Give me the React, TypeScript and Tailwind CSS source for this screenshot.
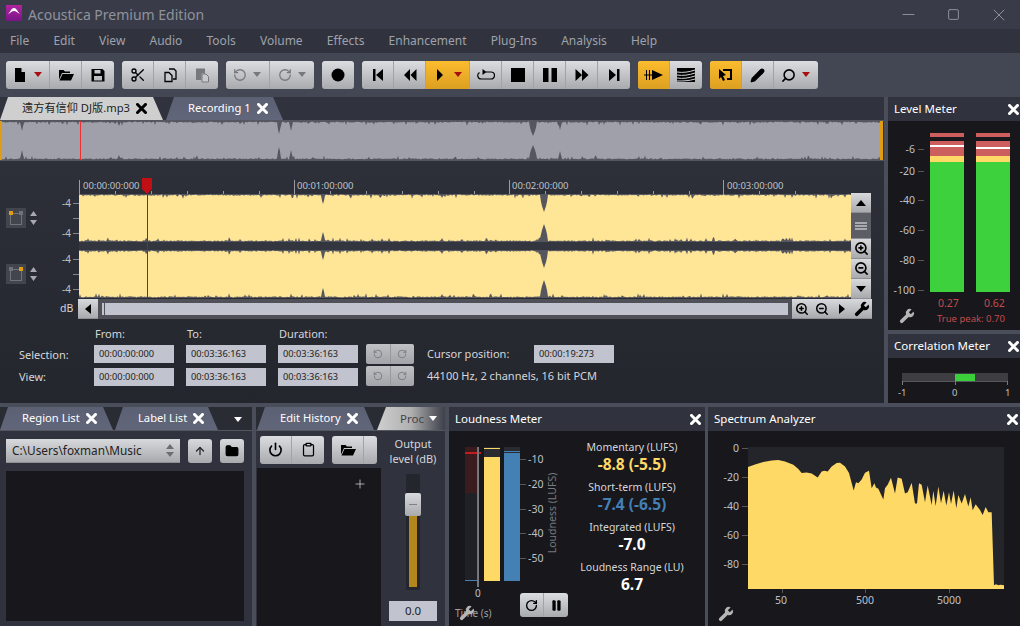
import { ReactNode } from "react";
import {
  ArrowUp,
  Folder,
  Power,
  Clipboard,
  Pause,
  Plus,
  Minus,
  Square,
  X,
  RotateCcw,
  RotateCw,
  Scissors,
  Pencil,
  Search,
  ZoomIn,
  ZoomOut,
} from "lucide-react";

// deterministic noise so the waveform does not change between renders
function noise(i: number, seed: number) {
  const v = Math.sin(i * 12.9898 + seed * 78.233) * 43758.5453;
  return v - Math.floor(v);
}

type Dip = [number, number, number]; // centre, depth, half width

function edge(width: number, seed: number, dips: Dip[]) {
  const out: number[] = [];
  for (let x = 0; x <= width; x++) {
    const n = noise(x, seed);
    let h = n > 0.93 ? 2 + (n - 0.93) * 40 : 0.6 + n * 1.2;
    for (const [c, depth, hw] of dips) {
      const d = Math.abs(x - c);
      if (d < hw) h = Math.max(h, depth * Math.pow(1 - d / hw, 0.6));
    }
    out.push(h);
  }
  return out;
}

function bandPath(width: number, height: number, seed: number, dips: Dip[]) {
  const top = edge(width, seed, dips);
  const bot = edge(width, seed + 3, dips);
  let d = "M0 " + top[0].toFixed(1);
  top.forEach((h, i) => {
    d += " L" + i + " " + h.toFixed(1);
  });
  for (let i = bot.length - 1; i >= 0; i--) {
    d += " L" + i + " " + (height - bot[i]).toFixed(1);
  }
  return d + " Z";
}

const spectrumPts =
  "129,187 150,179 175,172 200,167 220,166 240,170 265,180 280,193 290,205 305,203 320,206 338,218 350,200 358,198 368,200 380,185 395,175 405,174 420,185 432,205 446,257 453,232 460,235 470,224 480,204 492,198 500,250 508,235 513,248 520,252 535,284 540,250 548,240 558,219 570,266 578,218 590,222 600,266 608,262 620,234 630,296 636,296 642,235 650,240 660,292 668,242 680,300 685,258 692,303 700,245 708,295 716,258 724,302 732,262 738,297 746,257 754,310 760,270 770,296 780,267 790,305 797,277 803,316 812,298 825,315 833,330 842,306 850,322 860,322 867,540 873,537 880,540 886,538 897,540 897,551 129,551";

const overviewDips: Dip[] = [
  [22, 10, 1.5],
  [119, 5, 1.5],
  [279, 13, 2],
  [291, 10, 1.5],
  [533, 15, 4],
  [560, 9, 1.5],
];
const trackDips: Dip[] = [
  [244, 10, 2],
  [465, 18, 4],
  [363, 4, 1.5],
];

function Toolbar({ children }: { children: ReactNode }) {
  return (
    <div className="flex h-7 rounded-[3px] overflow-hidden bg-gradient-to-b from-[#dcdde0] to-[#a9aaae]">{children}</div>
  );
}

function Btn({ wide, active, children, last }: { wide?: boolean; active?: boolean; children: ReactNode; last?: boolean }) {
  return (
    <div
      className={`flex items-center justify-center h-full text-black ${wide ? "w-[44px]" : "w-8"} ${
        last ? "" : "border-r border-[#a2a3a8]"
      } ${active ? "bg-gradient-to-b from-[#fbbc2e] to-[#dd9f20]" : ""}`}
    >
      {children}
    </div>
  );
}

function Caret({ red }: { red?: boolean }) {
  return (
    <svg width="10" height="6" viewBox="0 0 10 6" className="ml-[5px]">
      <path d="M1 0h8L5 5z" fill={red ? "#a80f12" : "#77787c"} />
    </svg>
  );
}

function Glyph({ d, size = 16 }: { d: string; size?: number }) {
  return (
    <svg width={size} height={size} viewBox="0 0 16 16" fill="currentColor" fillRule="evenodd">
      <path d={d} />
    </svg>
  );
}

const folderOpenD = "M1 3h4.500L7 4.500h5V6H4L1 12.500zM4.500 7H16l-3 6.500H1.500z";
const wrenchD = "M14.600 3.400L11.800 6.200 9.800 4.200 12.600 1.400A4 4 0 0 0 7 6.400L1.400 12A1.800 1.800 0 0 0 4 14.600L9.600 9A4 4 0 0 0 14.600 3.400z";

function WrenchIcon() {
  return (
    <span className="text-[#b5b5b5]">
      <Glyph d={wrenchD} />
    </span>
  );
}

function CloseX({ color = "white" }: { color?: string }) {
  return (
    <svg width="11" height="11" viewBox="0 0 11 11">
      <path d="M1.500 1.500l8 8M9.500 1.500l-8 8" stroke={color} strokeWidth="3" strokeLinecap="square" />
    </svg>
  );
}

function Field({ value }: { value: string }) {
  return (
    <div className="w-20 h-[18px] bg-[#c1c4ce] text-[#222] text-[9.25px] leading-[18px] pl-[5px]">{value}</div>
  );
}

function UndoPair() {
  return (
    <div className="flex h-5 w-12 rounded-[2px] overflow-hidden bg-gradient-to-b from-[#c0c1c5] to-[#a3a4a9] text-[#74757a]">
      <div className="flex-1 flex items-center justify-center border-r border-[#999]">
        <RotateCcw size={10} strokeWidth={2} />
      </div>
      <div className="flex-1 flex items-center justify-center">
        <RotateCw size={10} strokeWidth={2} />
      </div>
    </div>
  );
}

function PanelHeader({ title, right = "pr-[1px]" }: { title: string; right?: string }) {
  return (
    <div className={`h-[24px] shrink-0 bg-[#30333d] flex items-center justify-between pl-[6px] text-[11.5px] text-white ${right}`}>
      <span>{title}</span>
      <CloseX />
    </div>
  );
}

function ScrollBtn({ children }: { children: ReactNode }) {
  return (
    <div className="w-5 h-5 shrink-0 flex items-center justify-center bg-gradient-to-b from-[#d8d9dc] to-[#a9aaae] border-b border-[#8e8f94] text-black">
      {children}
    </div>
  );
}

function Tab({ label, className, light }: { label: string; className: string; light?: boolean }) {
  return (
    <div
      className={`h-[23px] shrink-0 flex items-center gap-[6px] text-[11.2px] [clip-path:polygon(8px_0,calc(100%-10px)_0,100%_100%,0_100%)] ${className} ${
        light ? "bg-[#cfcfcf] text-[#222]" : "bg-gradient-to-b from-[#5c6073] to-[#62667a] text-white"
      }`}
    >
      <span className="whitespace-nowrap">{label}</span>
      <CloseX color={light ? "black" : "white"} />
    </div>
  );
}

function TrackControls({ right }: { right?: boolean }) {
  return (
    <div className="w-[44px] flex items-center pl-[6px]">
      <div className="w-5 h-5 bg-[#43454d] relative flex items-center justify-center">
        <div className="w-3 h-3 mt-[1px] border border-[#70727a]" />
        <div className={`absolute top-[3px] left-[3px] w-[4px] h-[4px] ${right ? "bg-[#70727a]" : "bg-[#e09c12]"}`} />
        <div className={`absolute top-[3px] right-[3px] w-[4px] h-[4px] ${right ? "bg-[#e09c12]" : "bg-[#70727a]"}`} />
      </div>
      <svg width="7" height="14" viewBox="0 0 7 14" className="ml-1">
        <path d="M3.500 0L7 5H0zM0 9h7l-3.500 5z" fill="#a8a9ae" />
      </svg>
    </div>
  );
}

function DbScale() {
  return (
    <div className="flex-1 flex flex-col justify-between text-[10px] leading-[10px] text-[#bfc1c8] items-end py-1">
      {["-4", "-", "-4"].map((t, i) => (
        <div key={i} className="flex items-center gap-[2px]">
          {t !== "-" && <span>{t}</span>}
          <div className="w-[6px] h-px bg-[#85878f]" />
        </div>
      ))}
    </div>
  );
}

function ScaleRow({ label, className }: { label: string; className: string }) {
  return (
    <div className={`absolute flex items-center gap-[3px] text-[10.5px] leading-[14px] text-[#bfc1c8] ${className}`}>
      <span>{label}</span>
      <div className="w-[6px] h-px bg-[#55565c]" />
    </div>
  );
}

function LoudScale({ label, className }: { label: string; className: string }) {
  return (
    <div className={`absolute left-[71px] flex items-center gap-[2px] text-[10.5px] leading-[14px] text-[#bfc1c8] ${className}`}>
      <div className="w-[6px] h-px bg-[#55565c]" />
      <span>{label}</span>
    </div>
  );
}

function LevelBar({ whiteClass }: { whiteClass: string }) {
  return (
    <div className="w-full h-full flex flex-col">
      <div className="h-[4px] bg-[#cc5e5e]" />
      <div className="h-[4px]" />
      <div className="h-[15px] bg-[#cc5e5e] relative">
        <div className={`absolute w-full h-[2px] bg-white ${whiteClass}`} />
      </div>
      <div className="h-[6px] bg-[#ffd966]" />
      <div className="flex-1 bg-[#3ed13e]" />
    </div>
  );
}

function Stat({ label, value, color }: { label: string; value: string; color: string }) {
  return (
    <div className="flex flex-col items-center mb-[7px]">
      <span className="whitespace-nowrap text-[10.5px] leading-[15px] text-[#d6d6da]">{label}</span>
      <span className={`text-[15.5px] font-bold leading-[18px] ${color}`}>{value}</span>
    </div>
  );
}

const majorTicks = ["left-0", "left-[215px]", "left-[430px]", "left-[644px]"];
const minorTicks = [36, 72, 108, 144, 180, 251, 287, 323, 359, 395, 466, 502, 538, 574, 610, 680, 716];

export default function App() {
  const overview = bandPath(884, 39, 1, overviewDips);
  const chanA = bandPath(772, 48, 2, trackDips);
  const chanB = bandPath(772, 48, 5, trackDips);

  return (
    <div
      className="w-[1020px] h-[626px] overflow-hidden flex flex-col bg-[#4a4d5a] text-[#d6d6da] text-[11.5px]"
      style={{ fontFamily: '"Noto Sans", "Noto Sans CJK SC", sans-serif' }}
    >
      {/* Title bar */}
      <div className="h-[29px] shrink-0 bg-[#393c48] flex items-center pl-[6px]">
        <svg width="16" height="16" viewBox="0 0 16 16" className="mb-[3px]">
          <defs>
            <linearGradient id="logo" x1="0" y1="0" x2="0" y2="1">
              <stop offset="0" stopColor="#b0249f" />
              <stop offset="1" stopColor="#7a1488" />
            </linearGradient>
          </defs>
          <rect width="16" height="16" fill="url(#logo)" />
          <path d="M1 10C4 8 5 3 8 3s4 5 7 7C12 8 10 6 8 6s-4 2-7 4z" fill="white" />
        </svg>
        <span className="ml-[6px] text-[14px] text-[#8f929c]">Acoustica Premium Edition</span>
        <div className="ml-auto flex items-center text-[#8f929c]">
          <div className="w-10 flex justify-center">
            <Minus size={19} strokeWidth={1.2} />
          </div>
          <div className="w-[50px] flex justify-center">
            <Square size={13} strokeWidth={1.8} />
          </div>
          <div className="w-[42px] flex justify-center">
            <X size={20} strokeWidth={1.2} />
          </div>
        </div>
      </div>

      {/* Menu */}
      <div className="h-[24px] shrink-0 bg-[#30333d] flex items-center pl-[10px] gap-[24.2px] text-[12px] text-[#9fa2ac]">
        {["File", "Edit", "View", "Audio", "Tools", "Volume", "Effects", "Enhancement", "Plug-Ins", "Analysis", "Help"].map((m) => (
          <span key={m}>{m}</span>
        ))}
      </div>

      {/* Toolbar */}
      <div className="h-[44px] shrink-0 bg-[#434753] flex items-center pl-[6px] gap-[8px]">
        <Toolbar>
          <Btn wide>
            <Glyph d="M3 1h6l4 4v10H3zM9.500 1.500V5H13" />
            <Caret red />
          </Btn>
          <Btn>
            <Glyph d={folderOpenD} />
          </Btn>
          <Btn last>
            <Glyph d="M1.500 2h11l2 2v10.500h-13zM4.500 3v3.500h6V3zM4 9v4.500h8V9z" />
          </Btn>
        </Toolbar>
        <Toolbar>
          <Btn>
            <Scissors size={16} />
          </Btn>
          <Btn>
            <svg width="16" height="16" viewBox="0 0 16 16" fill="none" stroke="black" strokeWidth="1.300">
              <path d="M7 2h5l2 2v8h-3" />
              <path d="M3 5.500h4l3 3v6H3z" fill="#c8c9cc" />
            </svg>
          </Btn>
          <Btn last>
            <svg width="16" height="16" viewBox="0 0 16 16">
              <path d="M2 1.500h9v5H7.500V13H2z" fill="#77787c" />
              <path d="M8 7h4l2.500 2.500v5.500H8z" fill="#c8c9cc" stroke="#77787c" />
            </svg>
          </Btn>
        </Toolbar>
        <Toolbar>
          <Btn wide>
            <RotateCcw size={14} strokeWidth={2.2} className="text-[#77787c]" />
            <Caret />
          </Btn>
          <Btn wide last>
            <RotateCw size={14} strokeWidth={2.2} className="text-[#77787c]" />
            <Caret />
          </Btn>
        </Toolbar>
        <Toolbar>
          <Btn last>
            <Glyph d="M8 1.500a6.500 6.500 0 1 0 0 13 6.500 6.500 0 0 0 0-13z" />
          </Btn>
        </Toolbar>
        <Toolbar>
          <Btn>
            <Glyph d="M3 2h2.500v12H3zM13 2v12L6 8z" />
          </Btn>
          <Btn>
            <Glyph d="M8 2v12L2 8zM14.500 2v12L8.500 8z" />
          </Btn>
          <Btn wide active>
            <Glyph d="M5 2l6 6-6 6z" />
            <Caret red />
          </Btn>
          <Btn>
            <svg width="18" height="14" viewBox="0 0 18 14" fill="none" stroke="black" strokeWidth="1.200">
              <path d="M9 4h5a3.500 3.500 0 0 1 0 7H4a3.500 3.500 0 0 1-1.500-6.500" />
              <path d="M5.500 1l4 3-4 3z" fill="black" stroke="none" />
            </svg>
          </Btn>
          <Btn>
            <Glyph d="M1 1h14v14H1z" />
          </Btn>
          <Btn>
            <Glyph d="M1 1h5.500v14H1zM9.500 1H15v14H9.500z" />
          </Btn>
          <Btn>
            <Glyph d="M1.500 2l6.500 6-6.500 6zM8 2l6.500 6L8 14z" />
          </Btn>
          <Btn last>
            <Glyph d="M3 2l7 6-7 6zM11 2h2.500v12H11z" />
          </Btn>
        </Toolbar>
        <Toolbar>
          <Btn active>
            <svg width="20" height="14" viewBox="0 0 20 14">
              <path d="M0 6.500h2V2h1v4.500h2V2h1v4.500h2V2l11 5-11 5V7.500H6V12H5V7.500H3V12H2V7.500H0z" />
            </svg>
          </Btn>
          <Btn last>
            <svg width="20" height="16" viewBox="0 0 20 16">
              <rect x="1" y="1" width="18" height="14" />
              <path d="M1 5C7 6 13 5 19 3M1 8C7 9 13 8 19 6M1 11C7 12 13 11 19 9M1 14C7 14 13 14 19 12" stroke="#d0d1d4" fill="none" strokeWidth="1" />
            </svg>
          </Btn>
        </Toolbar>
        <Toolbar>
          <Btn active>
            <Glyph d="M5 2h9v11H9v-2h3V4H5zM1 2l7 6-3 1 2 4-2 1-2-4-2 2z" />
          </Btn>
          <Btn>
            <Pencil size={15} fill="black" />
          </Btn>
          <Btn wide last>
            <Search size={15} strokeWidth={2.5} className="-scale-x-100" />
            <Caret red />
          </Btn>
        </Toolbar>
      </div>

      {/* Upper workspace */}
      <div className="h-[306px] shrink-0 flex">
        <div className="w-[884px] flex flex-col bg-gradient-to-b from-[#30333d] to-[#24262d]">
          <div className="h-[23px] shrink-0 flex items-end bg-[#30333d]">
            <Tab label="遠方有信仰 DJ版.mp3" className="w-[163px] pl-[22px]" light />
            <Tab label="Recording 1" className="w-[117px] ml-[3px] pl-[22px]" />
          </div>
          <div className="h-px shrink-0 bg-[#55575f]" />
          <svg width="884" height="39" viewBox="0 0 884 39" className="shrink-0">
            <rect width="884" height="39" fill="#55565e" />
            <path d={overview} fill="#a0a0aa" />
            <rect width="2" height="39" fill="#e09c12" />
            <rect x="880" width="3" height="39" fill="#e09c12" />
            <rect x="883" width="1" height="39" fill="#30333d" />
            <rect x="80" width="1" height="39" fill="#f03030" />
          </svg>
          <div className="h-px shrink-0 bg-[#55575f]" />

          <div className="h-[33px] shrink-0 flex">
            <div className="w-[79px]" />
            <div className="relative flex-1 text-[9.5px] text-[#bfc1c8]">
              <span className="absolute left-[4px] top-[20px] leading-none">00:00:00:000</span>
              <span className="absolute left-[218px] top-[20px] leading-none">00:01:00:000</span>
              <span className="absolute left-[433px] top-[20px] leading-none">00:02:00:000</span>
              <span className="absolute left-[648px] top-[20px] leading-none">00:03:00:000</span>
              {majorTicks.map((c) => (
                <div key={c} className={`absolute top-[19px] w-px h-[14px] bg-[#9a9ca4] ${c}`} />
              ))}
              {minorTicks.map((x) => (
                <div key={x} style={{ left: x }} className="absolute bottom-0 w-px h-[3px] bg-[#9a9ca4]" />
              ))}
              <svg width="10" height="16" viewBox="0 0 10 16" className="absolute left-[63px] top-[17px]">
                <path d="M0 0h10v11l-5 5-5-5z" fill="#c20f14" />
              </svg>
            </div>
          </div>

          {/* Tracks */}
          <div className="flex h-[104px] shrink-0">
            <div className="w-[79px] flex flex-col shrink-0">
              <div className="h-[48px] flex">
                <TrackControls />
                <DbScale />
              </div>
              <div className="h-[48px] mt-2 flex">
                <TrackControls right />
                <DbScale />
              </div>
            </div>
            <div className="w-[772px] shrink-0">
              <svg width="772" height="104" viewBox="0 0 772 104">
                <rect width="772" height="48" fill="#55565e" />
                <rect y="48" width="772" height="8" fill="#34363f" />
                <rect y="56" width="772" height="48" fill="#55565e" />
                <path d={chanA} fill="#ffe596" />
                <g transform="translate(0 56)">
                  <path d={chanB} fill="#ffe596" />
                </g>
                <rect x="68" width="1" height="104" fill="#b81414" />
              </svg>
            </div>
            <div className="flex flex-col shrink-0 w-5 -mt-px">
              <ScrollBtn>
                <svg width="10" height="6" viewBox="0 0 10 6">
                  <path d="M5 0l5 6H0z" />
                </svg>
              </ScrollBtn>
              <div className="h-[26px] shrink-0 flex flex-col justify-center gap-[1px] items-center bg-[#5c5e66] border-b border-[#8e8f94]">
                <div className="w-3 h-[2px] bg-[#a8a9ae]" />
                <div className="w-3 h-[2px] bg-[#a8a9ae]" />
                <div className="w-3 h-[2px] bg-[#a8a9ae]" />
              </div>
              <ScrollBtn>
                <ZoomIn size={15} strokeWidth={2.6} />
              </ScrollBtn>
              <ScrollBtn>
                <ZoomOut size={15} strokeWidth={2.6} />
              </ScrollBtn>
              <ScrollBtn>
                <svg width="10" height="6" viewBox="0 0 10 6">
                  <path d="M0 0h10L5 6z" />
                </svg>
              </ScrollBtn>
            </div>
          </div>

          {/* Horizontal scroll */}
          <div className="flex h-[20px] shrink-0 mt-px ml-[60px] items-center">
            <span className="w-[18px] text-[10.5px] text-[#d6d6da]">dB</span>
            <ScrollBtn>
              <svg width="6" height="10" viewBox="0 0 6 10">
                <path d="M6 0v10L0 5z" />
              </svg>
            </ScrollBtn>
            <div className="w-[694px] h-full bg-[#4f5058] flex items-center pl-1 pr-1 gap-px">
              <div className="w-[2px] h-3 bg-[#c1c4ce]" />
              <div className="flex-1 h-3 bg-[#c1c4ce]" />
            </div>
            <ScrollBtn>
              <ZoomIn size={14} strokeWidth={2.6} />
            </ScrollBtn>
            <ScrollBtn>
              <ZoomOut size={14} strokeWidth={2.6} />
            </ScrollBtn>
            <ScrollBtn>
              <svg width="6" height="10" viewBox="0 0 6 10">
                <path d="M0 0v10l6-5z" />
              </svg>
            </ScrollBtn>
            <ScrollBtn>
              <Glyph d={wrenchD} />
            </ScrollBtn>
          </div>

          {/* Selection info */}
          <div className="flex mt-[8px] pl-[19px]">
            <div className="w-[75px] pt-[20px] text-[#d6d6da] flex flex-col gap-[6px] leading-[16px] text-[11px]">
              <span>Selection:</span>
              <span>View:</span>
            </div>
            <div className="grid grid-cols-[80px_80px_80px] gap-x-3 gap-y-1 text-[11px] leading-[14px] pl-px">
              <span>From:</span>
              <span>To:</span>
              <span>Duration:</span>
              <div className="-ml-px"><Field value="00:00:00:000" /></div>
              <div className="-ml-px"><Field value="00:03:36:163" /></div>
              <div className="-ml-px"><Field value="00:03:36:163" /></div>
              <div className="-ml-px"><Field value="00:00:00:000" /></div>
              <div className="-ml-px"><Field value="00:03:36:163" /></div>
              <div className="-ml-px"><Field value="00:03:36:163" /></div>
            </div>
            <div className="flex flex-col gap-[2px] ml-[7px] mt-[17px]">
              <UndoPair />
              <UndoPair />
            </div>
            <div className="ml-[13px] mt-[18px] text-[11px] leading-[18px] flex flex-col gap-[4px]">
              <div className="flex">
                <span className="w-[107px]">Cursor position:</span>
                <Field value="00:00:19:273" />
              </div>
              <span>44100 Hz, 2 channels, 16 bit PCM</span>
            </div>
          </div>
        </div>

        {/* Right meters */}
        <div className="ml-1 flex-1 flex flex-col">
          <PanelHeader title="Level Meter" />
          <div className="h-[209px] shrink-0 bg-[#17171c] relative">
            <div className="absolute left-[42px] top-[12px] w-[34px] h-[159px]">
              <LevelBar whiteClass="top-1" />
            </div>
            <div className="absolute left-[88px] top-[12px] w-[34px] h-[159px]">
              <LevelBar whiteClass="top-[6px]" />
            </div>
            <ScaleRow label="-6" className="right-[96px] top-[21px]" />
            <ScaleRow label="-20" className="right-[96px] top-[43px]" />
            <ScaleRow label="-40" className="right-[96px] top-[72px]" />
            <ScaleRow label="-60" className="right-[96px] top-[102px]" />
            <ScaleRow label="-80" className="right-[96px] top-[132px]" />
            <ScaleRow label="-100" className="right-[96px] top-[162px]" />
            <span className="absolute left-[50px] top-[175px] text-[10.5px] text-[#c24d4d]">0.27</span>
            <span className="absolute left-[96px] top-[175px] text-[10.5px] text-[#c24d4d]">0.62</span>
            <span className="absolute left-[49px] top-[191px] text-[9.5px] text-[#c24d4d]">True peak: 0.70</span>
            <div className="absolute left-[11px] top-[187px]">
              <WrenchIcon />
            </div>
          </div>
          <div className="h-1 shrink-0" />
          <PanelHeader title="Correlation Meter" />
          <div className="flex-1 bg-[#17171c] relative">
            <div className="absolute left-[14px] top-[15px] w-[106px] h-[9px] bg-[#3e3d42] border-b border-[#55565c]">
              <div className="absolute left-[53px] w-[20px] h-[7px] top-px bg-[#3ccf3c]" />
              <div className="absolute left-0 top-[8px] w-px h-1 bg-[#77797f]" />
              <div className="absolute left-[53px] top-[8px] w-px h-1 bg-[#77797f]" />
              <div className="absolute right-0 top-[8px] w-px h-1 bg-[#77797f]" />
            </div>
            <span className="absolute left-[10px] top-[28px] text-[9.5px] text-[#bfc1c8]">-1</span>
            <span className="absolute left-[64px] top-[28px] text-[9.5px] text-[#bfc1c8]">0</span>
            <span className="absolute left-[117px] top-[28px] text-[9.5px] text-[#bfc1c8]">1</span>
          </div>
        </div>
      </div>

      {/* Lower workspace */}
      <div className="flex-1 mt-1 flex min-h-0">
        <div className="w-[252px] shrink-0 bg-[#30333d] flex flex-col pl-[6px] pr-2">
          <div className="-ml-[6px] -mr-2 h-[24px] flex items-end bg-[#2a2c34] border-b border-[#55575f]">
            <Tab label="Region List" className="w-[113px] pl-[22px]" />
            <Tab label="Label List" className="w-[103px] ml-[2px] pl-[23px]" />
            <div className="ml-auto w-7 flex justify-center pb-[8px]">
              <svg width="8" height="5" viewBox="0 0 8 5">
                <path d="M0 0h8L4 5z" fill="white" />
              </svg>
            </div>
          </div>
          <div className="flex items-center mt-2 gap-2">
            <div className="w-[174px] h-6 bg-gradient-to-b from-[#d8d9dc] to-[#a9aaae] border-b border-[#8e8f94] text-[#222] text-[11.8px] flex items-center justify-between px-[6px]">
              <span>C:\Users\foxman\Music</span>
              <svg width="8" height="13" viewBox="0 0 8 13">
                <path d="M4 0l4 5H0zM0 8h8l-4 5z" fill="#6d6e73" />
              </svg>
            </div>
            <div className="w-6 h-6 rounded-[3px] bg-gradient-to-b from-[#d8d9dc] to-[#a9aaae] flex items-center justify-center text-[#222]">
              <ArrowUp size={12} strokeWidth={2.5} />
            </div>
            <div className="w-6 h-6 rounded-[3px] bg-gradient-to-b from-[#d8d9dc] to-[#a9aaae] flex items-center justify-center text-black">
              <Folder size={14} fill="black" />
            </div>
          </div>
          <div className="flex-1 mt-2 mb-[5px] bg-[#17171c]" />
        </div>

        <div className="ml-1 w-[189px] shrink-0 bg-[#30333d] flex flex-col">
          <div className="h-[24px] shrink-0 flex items-end bg-[#2a2c34] border-b border-[#55575f] relative">
            <Tab label="Edit History" className="w-[117px] ml-px pl-[23px]" />
            <div className="w-[69px] h-[23px] ml-[3px] bg-gradient-to-r from-[#cfcfcf] via-[#b0b0b0] to-[#3e404a] text-[#444] flex items-center pl-[23px] [clip-path:polygon(9px_0,100%_0,100%_100%,0_100%)]">
              Proc
            </div>
            <svg width="8" height="5" viewBox="0 0 8 5" className="absolute right-[8px] top-[9px]">
              <path d="M0 0h8L4 5z" fill="white" />
            </svg>
          </div>
          <div className="flex flex-1 min-h-0">
            <div className="w-[125px] shrink-0 flex flex-col">
              <div className="h-[37px] shrink-0 flex items-center pl-[4px] gap-2">
                <div className="flex h-7 rounded-[3px] overflow-hidden bg-gradient-to-b from-[#dcdde0] to-[#a9aaae] text-black">
                  <div className="w-8 flex items-center justify-center border-r border-[#a2a3a8]">
                    <Power size={15} strokeWidth={2.6} />
                  </div>
                  <div className="w-8 flex items-center justify-center">
                    <Clipboard size={15} strokeWidth={2} />
                  </div>
                </div>
                <div className="flex h-7 rounded-[3px] overflow-hidden bg-gradient-to-b from-[#dcdde0] to-[#a9aaae] text-black">
                  <div className="w-8 flex items-center justify-center border-r border-[#a2a3a8]">
                    <Glyph d={folderOpenD} />
                  </div>
                  <div className="w-[13px]" />
                </div>
              </div>
              <div className="flex-1 ml-px bg-[#17171c] relative">
                <Plus size={14} strokeWidth={1.3} className="absolute left-[96px] top-[9px] text-[#d6d6da]" />
              </div>
            </div>
            <div className="flex-1 flex flex-col items-center text-[11px] leading-[15px] pt-[5px] text-[#d6d6da]">
              <span>Output</span>
              <span>level (dB)</span>
              <div className="w-[14px] h-[116px] mt-2 bg-[#24262d] relative flex justify-center">
                <div className="absolute bottom-[3px] w-2 h-[71px] bg-[#b3861e]" />
                <div className="absolute top-[19px] w-4 h-[23px] rounded-[2px] bg-gradient-to-b from-[#d8d9dc] to-[#a9aaae] flex items-center justify-center">
                  <div className="w-2 h-px bg-[#808186]" />
                </div>
              </div>
              <div className="w-12 h-5 mt-[11px] bg-[#c1c4ce] text-[#222] text-center leading-5 text-[11.5px]">0.0</div>
            </div>
          </div>
        </div>

        <div className="ml-1 w-[256px] shrink-0 flex flex-col">
          <PanelHeader title="Loudness Meter" right="pr-1" />
          <div className="flex-1 bg-[#17171c] flex">
            <div className="relative w-[123px] shrink-0">
              <div className="absolute left-[16px] top-[16px] w-3 h-[134px] flex flex-col">
                <div className="h-[46px] bg-[#3a1c1e]" />
                <div className="flex-1 bg-[#202126]" />
                <div className="h-px bg-[#4580b5]" />
              </div>
              <div className="absolute left-[16px] top-[21px] w-[16px] h-[2px] bg-[#c21c1c]" />
              <div className="absolute left-[28px] top-[16px] w-[2px] h-[140px] bg-[#77797f]" />
              <div className="absolute left-[28px] top-[16px] w-px h-[134px] bg-[#4580b5]" />
              <div className="absolute left-[35px] top-[16px] w-4 h-[134px] bg-[#2a2b30]">
                <div className="h-px mt-px bg-[#ffd966]" />
                <div className="absolute top-[10px] bottom-0 w-full bg-[#ffd966]" />
              </div>
              <div className="absolute left-[55px] top-[16px] w-4 h-[134px] bg-[#2a2b30]">
                <div className="absolute top-[4px] h-px w-full bg-[#4580b5]" />
                <div className="absolute top-[6px] bottom-0 w-full bg-[#4580b5]" />
              </div>
              <LoudScale label="-10" className="top-[21px]" />
              <LoudScale label="-20" className="top-[46px]" />
              <LoudScale label="-30" className="top-[71px]" />
              <LoudScale label="-40" className="top-[95px]" />
              <LoudScale label="-50" className="top-[120px]" />
              <span className="absolute left-[104px] top-[82px] -translate-x-1/2 -translate-y-1/2 -rotate-90 whitespace-nowrap text-[10.5px] text-[#77797f]">
                Loudness (LUFS)
              </span>
              <span className="absolute left-[26px] top-[155px] text-[10px] text-[#bfc1c8]">0</span>
              <span className="absolute left-[6px] top-[175px] text-[10px] text-[#a0a1a6]">Time (s)</span>
              <div className="absolute left-[10px] top-[174px]">
                <WrenchIcon />
              </div>
              <div className="absolute left-[71px] top-[162px] flex h-6 rounded-[3px] overflow-hidden bg-gradient-to-b from-[#dcdde0] to-[#a9aaae] text-black">
                <div className="w-6 flex items-center justify-center border-r border-[#a2a3a8]">
                  <RotateCw size={13} strokeWidth={2.5} />
                </div>
                <div className="w-6 flex items-center justify-center">
                  <Pause size={13} fill="black" strokeWidth={1} />
                </div>
              </div>
            </div>
            <div className="w-[120px] pt-[9px]">
              <Stat label="Momentary (LUFS)" value="-8.8 (-5.5)" color="text-[#ffd966]" />
              <Stat label="Short-term (LUFS)" value="-7.4 (-6.5)" color="text-[#4580b5]" />
              <Stat label="Integrated (LUFS)" value="-7.0" color="text-white" />
              <Stat label="Loudness Range (LU)" value="6.7" color="text-white" />
            </div>
          </div>
        </div>

        <div className="ml-[3px] flex-1 flex flex-col">
          <PanelHeader title="Spectrum Analyzer" right="pr-[2px]" />
          <div className="flex-1 bg-[#17171c] relative">
            <div className="absolute left-[40px] top-[16px] w-[256px] h-[142px] bg-[#24252a]">
              <svg width="256" height="142" viewBox="129 127 768 424" preserveAspectRatio="none">
                <polygon points={spectrumPts} fill="#ffd966" />
              </svg>
            </div>
            <ScaleRow label="0" className="right-[272px] top-[10px]" />
            <ScaleRow label="-20" className="right-[272px] top-[39px]" />
            <ScaleRow label="-40" className="right-[272px] top-[68px]" />
            <ScaleRow label="-60" className="right-[272px] top-[97px]" />
            <ScaleRow label="-80" className="right-[272px] top-[126px]" />
            {[
              ["50", "left-[73px]", "left-[74px]"],
              ["500", "left-[157px]", "left-[157px]"],
              ["5000", "left-[241px]", "left-[241px]"],
            ].map(([t, c, tick]) => (
              <div key={t}>
                <div className={`absolute top-[158px] w-px h-1 bg-[#55565c] ${tick}`} />
                <span className={`absolute top-[162px] text-[10.5px] -translate-x-1/2 text-[#bfc1c8] ${c}`}>{t}</span>
              </div>
            ))}
            <div className="absolute left-[10px] top-[175px]">
              <WrenchIcon />
            </div>
          </div>
        </div>
      </div>
    </div>
  );
}
